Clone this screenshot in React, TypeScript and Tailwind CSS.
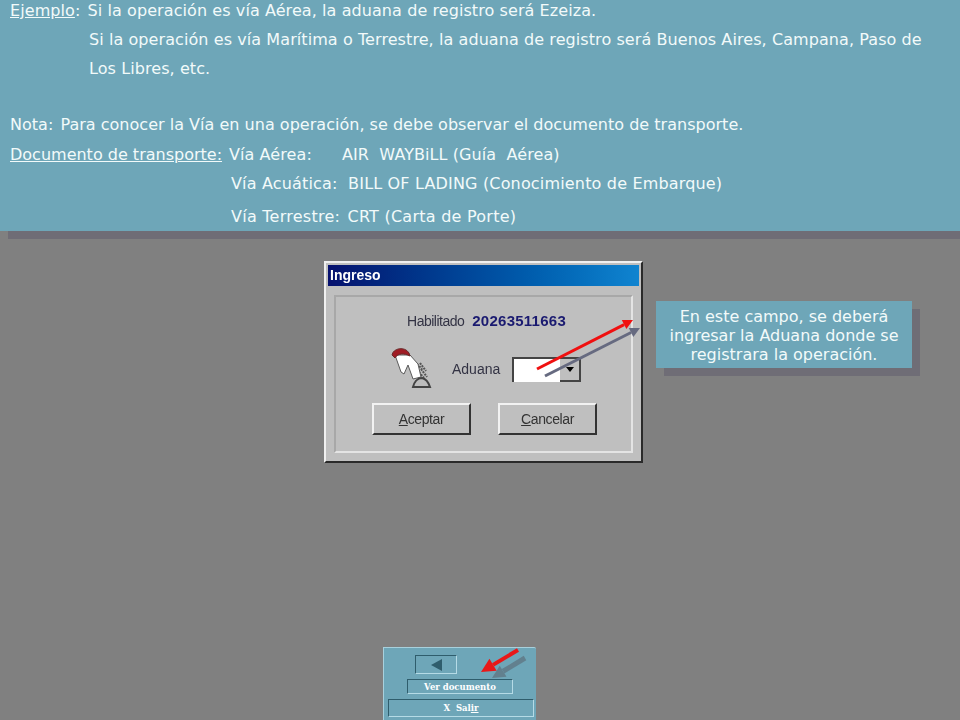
const font = "font-['DejaVu_Sans',Verdana,sans-serif]";

function Arrow({ x1, y1, x2, y2, color, width = 3, head = 10 }: { x1: number; y1: number; x2: number; y2: number; color: string; width?: number; head?: number }) {
  const a = Math.atan2(y2 - y1, x2 - x1);
  const bx = x2 - head * Math.cos(a);
  const by = y2 - head * Math.sin(a);
  const nx = (head / 2) * Math.sin(a);
  const ny = (head / 2) * Math.cos(a);
  return (
    <>
      <line x1={x1} y1={y1} x2={bx} y2={by} stroke={color} strokeWidth={width} />
      <polygon points={`${x2},${y2} ${bx + nx},${by - ny} ${bx - nx},${by + ny}`} fill={color} />
    </>
  );
}

function HandIcon() {
  return (
    <svg width="44" height="44" viewBox="0 0 44 44" className="blur-[0.5px]">
      <path d="M28 17 L33 22 M31 16 L37 24 M32 22 L38 30 M30 25 L35 31" stroke="#555" strokeWidth="2" strokeDasharray="2 1" />
      <path d="M6 8 L21 8 L29 17 L32 30 L24 32 L19 18 L15 27 L12 25 Z" fill="#ffffff" stroke="#5a5a5a" strokeWidth="1" />
      <path d="M3 8 C4 1 16 -1 20 6 L21 9 C15 6 9 6 6 11 Z" fill="#a01c24" stroke="#6a2a2a" strokeWidth="1" />
      <path d="M24 40 C25 36 28 31 33 31 C38 32 40 37 41 40 Z" fill="#bdbdbd" stroke="#444" strokeWidth="2" />
    </svg>
  );
}

function Win98Button({ first, rest }: { first: string; rest: string }) {
  return (
    <button className="w-[99px] h-[32px] bg-[#bfbfbf] border-2 border-t-[#f2f2f2] border-l-[#f2f2f2] border-r-[#333333] border-b-[#333333] text-[14px] tracking-[-0.4px] text-[#333333] font-['Liberation_Sans',Arial,sans-serif]">
      <span className="underline">{first}</span>
      {rest}
    </button>
  );
}

export default function App() {
  return (
    <div className={`relative w-[960px] h-[720px] overflow-hidden bg-[#808080] flex flex-col ${font}`}>
      {/* banner */}
      <div className="h-[235px] shrink-0 bg-[#6ea6b8] text-[#f2fafa] text-[16px] tracking-[0.08px] leading-[29px] shadow-[8px_8px_0_#6f6d76] pl-[10px] -mt-[4px]">
        <div>
          <span className="underline">Ejemplo</span>
          <span className="mr-[2px]">:</span> Si la operación es vía Aérea, la aduana de registro será Ezeiza.
        </div>
        <div className="pl-[79px]">Si la operación es vía Marítima o Terrestre, la aduana de registro será Buenos Aires, Campana, Paso de</div>
        <div className="pl-[79px]">Los Libres, etc.</div>
        <div className="h-[27px]" />
        <div className="tracking-[0.02px]">
          <span className="mr-[2px]">Nota:</span> Para conocer la Vía en una operación, se debe observar el documento de transporte.
        </div>
        <div className="flex mt-[1px]">
          <span className="underline w-[219px] tracking-[0px]">Documento de transporte:</span>
          <span className="w-[113px]">Vía Aérea:</span>
          <span className="whitespace-pre">AIR  WAYBiLL (Guía  Aérea)</span>
        </div>
        <div className="pl-[221px] whitespace-pre tracking-[0.17px]">Vía Acuática:  BILL OF LADING (Conocimiento de Embarque)</div>
        <div className="pl-[221px] mt-[4px] tracking-[0.25px]">
          <span className="mr-[2px]">Vía Terrestre:</span> CRT (Carta de Porte)
        </div>
      </div>

      {/* dialog + callout */}
      <div className="flex items-start pl-[324px] pt-[30px]">
        <div className="w-[319px] h-[202px] bg-[#bfbfbf] border-t-2 border-l-2 border-t-[#f0f0f0] border-l-[#f0f0f0] border-r-2 border-b-2 border-r-[#2a2a2a] border-b-[#2a2a2a] p-[2px] font-['Liberation_Sans',Arial,sans-serif] blur-[0.35px]">
          <div className="h-[21px] bg-gradient-to-r from-[#06106e] to-[#1084d0] text-white text-[14px] font-bold leading-[21px] pl-[2px]">Ingreso</div>
          <div className="mx-[6px] mt-[9px] h-[158px] border-2 border-[#e4e4e4] border-t-[#a8a8a8] border-l-[#a8a8a8] flex flex-col">
            <div className="flex justify-center items-center gap-[8px] pt-[12px] pl-[6px] h-[36px]">
              <span className="text-[14px] tracking-[-0.5px] text-[#333344]">Habilitado</span>
              <span className="text-[15px] tracking-[0.25px] font-bold text-[#1a1a70]">20263511663</span>
            </div>
            <div className="flex items-center h-[50px] mt-[11px] pl-[53px]">
              <HandIcon />
              <span className="text-[14px] text-[#333344] ml-[19px]">Aduana</span>
              <div className="ml-[12px] w-[69px] h-[25px] flex border-2 border-b-0 border-[#444444] bg-white">
                <div className="flex-1 bg-white" />
                <div className="w-[19px] bg-[#bfbfbf] border-b-2 border-[#444444] flex items-center justify-center">
                  <div className="w-0 h-0 border-l-[4px] border-r-[4px] border-t-[5px] border-l-transparent border-r-transparent border-t-black" />
                </div>
              </div>
            </div>
            <div className="flex gap-[27px] pl-[36px] mt-[9px]">
              <Win98Button first="A" rest="ceptar" />
              <Win98Button first="C" rest="ancelar" />
            </div>
          </div>
        </div>

        <div className="ml-[13px] mt-[40px] w-[256px] h-[67px] bg-[#6ea6b8] shadow-[8px_8px_0_#6f6d76] text-[#f2fafa] text-[16px] leading-[19px] text-center pt-[6px]">
          En este campo, se deberá
          <br />
          ingresar la Aduana donde se
          <br />
          registrara la operación.
        </div>
      </div>

      {/* nav panel */}
      <div className="mt-auto ml-[383px] w-[153px] h-[73px] bg-[#6ea6b8] border-t border-l border-[#a8d0dc] rounded-tr-[2px] flex flex-col font-['DejaVu_Serif',serif]">
        <div className="ml-[31px] mt-[7px] w-[42px] h-[19px] border border-t-[#2f5d6c] border-l-[#2f5d6c] border-r-[#b5dbe6] border-b-[#b5dbe6] flex items-center justify-center">
          <div className="w-0 h-0 border-t-[6px] border-b-[6px] border-r-[11px] border-t-transparent border-b-transparent border-r-[#2f5d6c]" />
        </div>
        <div className="ml-[23px] mt-[5px] w-[106px] h-[15px] border border-t-[#2f5d6c] border-l-[#2f5d6c] border-r-[#b5dbe6] border-b-[#b5dbe6] text-[8.5px] font-bold text-white text-center leading-[14px]">
          Ver documento
        </div>
        <div className="ml-[4px] mt-[5px] w-[146px] h-[18px] border border-t-[#2f5d6c] border-l-[#2f5d6c] border-r-[#b5dbe6] border-b-[#b5dbe6] text-[8.5px] font-bold text-white text-center leading-[16px] whitespace-pre">
          X  Sal<span className="underline">ir</span>
        </div>
      </div>

      {/* arrows lie over the dialog and the panel */}
      <svg className="absolute inset-0 pointer-events-none" width="960" height="720">
        <Arrow x1={545} y1={376} x2={640} y2={328} color="#666a80" />
        <Arrow x1={537} y1={369} x2={633} y2={320} color="#f01010" />
        <Arrow x1={525} y1={658} x2={492} y2={678} color="#62808e" width={5} head={13} />
        <Arrow x1={518} y1={650} x2={481} y2={672} color="#e81818" width={4} head={14} />
      </svg>
    </div>
  );
}
